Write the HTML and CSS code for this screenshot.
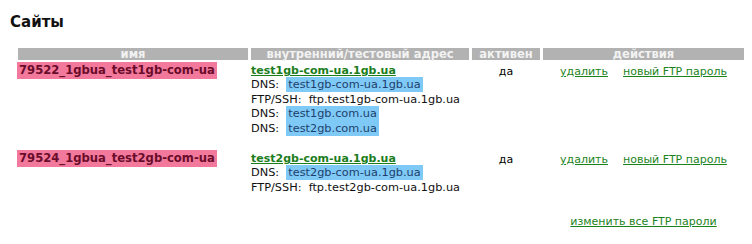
FILE: index.html
```html
<!DOCTYPE html>
<html lang="ru">
<head>
<meta charset="utf-8">
<title>Сайты</title>
<link rel="stylesheet" href="styles.css">
</head>
<body>
<h2 class="title">Сайты</h2>
<table class="sites">
  <colgroup>
    <col class="c-name"><col class="c-addr"><col class="c-act"><col class="c-do">
  </colgroup>
  <thead>
    <tr><th>имя</th><th>внутренний/тестовый адрес</th><th>активен</th><th>действия</th></tr>
  </thead>
  <tbody>
    <tr class="site">
      <td><span class="name">79522_1gbua_test1gb-com-ua</span></td>
      <td>
        <a class="domain" href="#">test1gb-com-ua.1gb.ua</a>
        <div class="rec">DNS:&nbsp; <span class="dns">test1gb-com-ua.1gb.ua</span></div>
        <div class="rec">FTP/SSH:&nbsp; ftp.test1gb-com-ua.1gb.ua</div>
        <div class="rec">DNS:&nbsp; <span class="dns">test1gb.com.ua</span></div>
        <div class="rec">DNS:&nbsp; <span class="dns">test2gb.com.ua</span></div>
      </td>
      <td class="active">да</td>
      <td class="actions"><a href="#">удалить</a><a href="#">новый FTP пароль</a></td>
    </tr>
    <tr class="site">
      <td><span class="name">79524_1gbua_test2gb-com-ua</span></td>
      <td>
        <a class="domain" href="#">test2gb-com-ua.1gb.ua</a>
        <div class="rec">DNS:&nbsp; <span class="dns">test2gb-com-ua.1gb.ua</span></div>
        <div class="rec">FTP/SSH:&nbsp; ftp.test2gb-com-ua.1gb.ua</div>
      </td>
      <td class="active">да</td>
      <td class="actions"><a href="#">удалить</a><a href="#">новый FTP пароль</a></td>
    </tr>
    <tr class="footer">
      <td></td><td></td><td></td>
      <td class="actions"><a href="#">изменить все FTP пароли</a></td>
    </tr>
  </tbody>
</table>
</body>
</html>
```
FILE: styles.css
```css
body {
  margin: 0;
  background: #ffffff;
  color: #000000;
  font-family: "DejaVu Sans", Verdana, sans-serif;
  font-size: 11px;
}

.title {
  margin: 14px 0 0 10px;
  font-size: 15px;
  font-weight: bold;
  line-height: 17px;
  color: #111111;
}

.sites {
  margin: 15px 0 0 15px;
  border-collapse: separate;
  border-spacing: 3px 2px;
  table-layout: fixed;
}

.c-name { width: 230px; }
.c-addr { width: 218px; }
.c-act { width: 68px; }
.c-do { width: 201px; }

.sites th {
  background: #b2b2b2;
  color: #f2f2f2;
  font-weight: bold;
  font-size: 11.5px;
  line-height: 12px;
  height: 12px;
  padding: 0;
  text-align: center;
}

.sites td {
  padding: 0 0 12px 0;
  vertical-align: top;
  line-height: 14px;
}

.name {
  display: inline-block;
  background: #f2799c;
  color: #6a0c2a;
  font-weight: bold;
  font-size: 11.6px;
  line-height: 17px;
  padding: 0 2px 0 2px;
  margin-left: -1px;
}

.domain {
  display: inline-block;
  margin-top: 2px;
  color: #1c7d1c;
  font-weight: bold;
  font-size: 11px;
  line-height: 14px;
}

.rec {
  font-family: "DejaVu Sans", sans-serif;
  font-size: 11.3px;
  line-height: 14.5px;
  color: #111111;
}

.dns {
  background: #7fc9f6;
  color: #1d3f6c;
  padding: 1px 2px;
}

.active {
  text-align: center;
  padding-top: 3px !important;
}

.actions {
  text-align: center;
}

.actions a {
  display: inline-block;
  margin-top: 3px;
  color: #1c831c;
  font-size: 11px;
}

.actions a + a {
  margin-left: 15px;
}

.footer td {
  padding-top: 3px;
}
```
